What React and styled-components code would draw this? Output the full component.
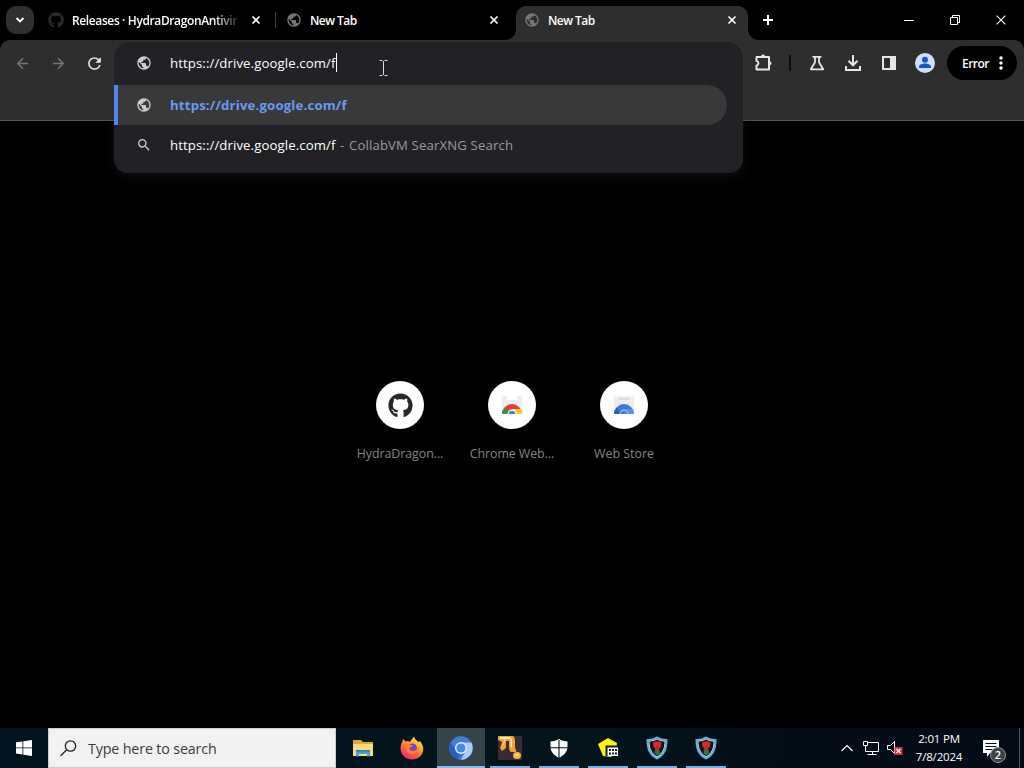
import React from 'react';
import styled, { createGlobalStyle } from 'styled-components';
import { FaGithub } from 'react-icons/fa';
import { MdPublic, MdSearch, MdArrowBack, MdArrowForward, MdRefresh, MdMoreVert } from 'react-icons/md';

const Global = createGlobalStyle`
  * { box-sizing: border-box; }
  html, body { margin: 0; background: #000; overflow: hidden; }
  body { font-family: "Open Sans", "Noto Sans", sans-serif; color: #fff; }
  svg { display: block; flex: none; }
`;

const Screen = styled.div`
  width: 1024px;
  height: 768px;
  display: flex;
  flex-direction: column;
  background: #000;
  position: relative;
`;

const TabStrip = styled.div`
  height: 40px;
  flex: none;
  display: flex;
  padding-left: 6px;
`;

const TabSearch = styled.div`
  width: 28px;
  height: 28px;
  margin: 6px 6px 0 0;
  border-radius: 10px;
  background: #303030;
  display: grid;
  place-items: center;
`;

const Tab = styled.div`
  position: relative;
  width: 232px;
  height: 34px;
  margin-top: 6px;
  padding: 0 10px 0 8px;
  display: flex;
  align-items: center;
  border-radius: 10px 10px 0 0;
  background: ${(p) => (p.$active ? '#2e2e2e' : 'transparent')};
  ${(p) => p.$active && `
    &::before, &::after {
      content: "";
      position: absolute;
      bottom: 0;
      width: 10px;
      height: 10px;
      background: radial-gradient(circle at 0 0, transparent 9.5px, #2e2e2e 10px);
    }
    &::before { left: -10px; }
    &::after { right: -10px; transform: scaleX(-1); }
  `}
`;

const Favicon = styled.div`
  width: 16px;
  margin: -6px 8px 0 0;
  color: ${(p) => p.$color};
`;

const TabTitle = styled.div`
  flex: 1;
  margin-top: -4px;
  font-size: 12px;
  line-height: 18px;
  font-weight: 600;
  letter-spacing: ${(p) => p.$track || 0}px;
  white-space: nowrap;
  ${(p) => p.$fade && 'mask-image: linear-gradient(90deg, #000 calc(100% - 28px), transparent);'}
`;

const TabClose = styled.div`
  width: 28px;
  margin: -6px -8px 0 0;
  display: grid;
  place-items: center;
`;

const TabDivider = styled.div`
  width: 1px;
  height: 16px;
  margin: 12px 2px 0 3px;
  background: ${(p) => (p.$hidden ? 'transparent' : '#3a3a3a')};
`;

const NewTab = styled.div`
  width: 28px;
  height: 28px;
  margin: 6px 0 0 6px;
  display: grid;
  place-items: center;
`;

const WindowControls = styled.div`
  margin-left: auto;
  display: flex;
`;

const WindowButton = styled.div`
  width: 46px;
  height: 40px;
  display: grid;
  place-items: center;
`;

const Toolbar = styled.div`
  height: 81px;
  flex: none;
  background: #2e2e2e;
  border-bottom: 1px solid #555;
  border-radius: 10px 10px 0 0;
  display: flex;
  justify-content: space-between;
  padding: 5px 7px 0 4px;
`;

const ToolGroup = styled.div`
  display: flex;
  height: 36px;
  align-items: center;
`;

const ToolButton = styled.div`
  width: 36px;
  height: 36px;
  display: grid;
  place-items: center;
  color: ${(p) => (p.$dim ? '#777' : '#e6e6e6')};
`;

const ToolDivider = styled.div`
  width: 2px;
  height: 16px;
  margin: 0 8px;
  background: #0c0c0c;
`;

const ErrorPill = styled.div`
  width: 70px;
  height: 34px;
  margin-left: 4px;
  padding-left: 15px;
  border-radius: 17px;
  background: #000;
  display: flex;
  align-items: center;
  font-size: 12px;
  font-weight: 600;
  letter-spacing: -0.55px;
  svg { margin-left: 2px; }
`;

const Omnibox = styled.div`
  position: absolute;
  left: 114px;
  top: 42px;
  width: 629px;
  height: 131px;
  border-radius: 16px 16px 14px 14px;
  background: #212126;
  box-shadow: 0 3px 12px rgba(60, 60, 65, 0.28);
  overflow: hidden;
`;

const OmniRow = styled.div`
  height: ${(p) => p.$height}px;
  width: ${(p) => (p.$selected ? 613 : 629)}px;
  display: flex;
  align-items: center;
  padding-left: 22px;
  font-size: 13.2px;
  line-height: 20px;
  white-space: pre;
  background: ${(p) => (p.$selected ? '#393939' : 'transparent')};
  border-radius: 0 20px 20px 0;
  ${(p) => p.$selected && 'border-left: 4px solid #4f86ec; padding-left: 18px;'}
  ${(p) => p.$input && 'padding-bottom: 2px;'}
  svg { color: #ccc; margin-right: 18px; }
`;

const OmniText = styled.span`
  color: ${(p) => p.$color || '#fff'};
  font-weight: ${(p) => (p.$bold ? 700 : 400)};
  letter-spacing: ${(p) => p.$track || 0}px;
  margin-left: ${(p) => p.$gap || 0}px;
`;

const Caret = styled.div`
  width: 1px;
  height: 19px;
  background: #fff;
`;

const Pointer = styled.svg`
  position: absolute;
  left: 378px;
  top: 59px;
`;

const Page = styled.main`
  flex: 1;
  display: flex;
  justify-content: center;
  align-items: flex-start;
  padding-top: 260px;
`;

const Shortcut = styled.div`
  width: 112px;
  display: flex;
  flex-direction: column;
  align-items: center;
`;

const ShortcutDisc = styled.div`
  width: 48px;
  height: 48px;
  border-radius: 50%;
  background: #fff;
  color: #24292e;
  display: grid;
  place-items: center;
`;

const ShortcutLabel = styled.div`
  margin-top: 16px;
  font-size: 12.4px;
  line-height: 18px;
  letter-spacing: ${(p) => p.$track || 0}px;
  color: #81868b;
  white-space: nowrap;
`;

const Taskbar = styled.footer`
  height: 40px;
  flex: none;
  display: flex;
  background: linear-gradient(90deg, #02151f, #03131c 60%, #030d18 76%, #030b16);
`;

const StartButton = styled.div`
  width: 48px;
  display: grid;
  place-items: center;
`;

const SearchBox = styled.div`
  width: 288px;
  border: 1px solid #c6ccd0;
  background: #f2f2f2;
  display: flex;
  align-items: center;
  padding-left: 11px;
  gap: 11px;
  color: #3c3c3c;
  font-size: 14.3px;
  letter-spacing: -0.16px;
`;

const Apps = styled.div`
  display: flex;
  gap: 1px;
  padding-left: 3px;
`;

const AppButton = styled.div`
  width: 48px;
  height: 40px;
  display: grid;
  place-items: center;
  background: ${(p) => (p.$active ? '#344448' : 'transparent')};
  box-shadow: ${(p) => (p.$active ? 'inset 0 -2px #86bdf0' : 'none')};
  position: relative;
  ${(p) => p.$open && `&::after {
    content: "";
    position: absolute;
    left: 4px;
    right: 4px;
    bottom: 0;
    height: 2px;
    background: #78b0e4;
  }`}
`;

const Tray = styled.div`
  margin-left: auto;
  display: flex;
  align-items: center;
`;

const Clock = styled.div`
  width: 72px;
  text-align: center;
  font-size: 11.5px;
  line-height: 18px;
  letter-spacing: -0.2px;
`;

const Notifications = styled.div`
  width: 44px;
  padding: 0 0 0 8px;
  position: relative;
`;

const Badge = styled.div`
  position: absolute;
  left: 15px;
  top: 7px;
  width: 16px;
  height: 16px;
  border-radius: 50%;
  border: 1px solid #8b9297;
  background: #3b4248;
  font-size: 11px;
  font-weight: 600;
  line-height: 14px;
  text-align: center;
`;

const ShowDesktop = styled.div`
  width: 5px;
  height: 40px;
  border-left: 1px solid #4c555e;
`;

const Cross = ({ size = 8, w = 1.7 }) => (
  <svg width={size} height={size} viewBox="0 0 8 8" stroke="#fff" strokeWidth={w} overflow="visible">
    <path d="M.5.5l7 7M7.5.5l-7 7" />
  </svg>
);

const Puzzle = () => (
  <svg width="20" height="20" viewBox="0 0 20 20" fill="none" stroke="currentColor" strokeWidth="2">
    <path d="M3.500 4H16v12.500H3.500v-3.800c2.600-.800 2.600-4 0-4.800z" strokeLinejoin="round" />
    <path d="M8 3.500a2 2 0 014 0zM16.500 8.300a2 2 0 010 4z" fill="currentColor" stroke="none" />
  </svg>
);

const Flask = () => (
  <svg width="20" height="20" viewBox="0 0 20 20" fill="none" stroke="currentColor" strokeWidth="1.8">
    <path d="M5.500 3.800h9M8 4v5.200L3.800 16.300h12.400L12 9.200V4" strokeLinejoin="round" />
  </svg>
);

const Download = () => (
  <svg width="20" height="20" viewBox="0 0 20 20" fill="none" stroke="currentColor" strokeWidth="2">
    <path d="M10 2v10M5.500 7.800L10 12.300l4.500-4.500M3 13v4h14v-4" />
  </svg>
);

const SidePanel = () => (
  <svg width="20" height="20" viewBox="0 0 20 20">
    <path d="M4 4h12v12H4z" fill="none" stroke="currentColor" strokeWidth="2" />
    <path d="M11 4h5v12h-5z" fill="currentColor" />
  </svg>
);

const Avatar = () => (
  <svg width="20" height="20" viewBox="0 0 20 20">
    <circle cx="10" cy="10" r="10" fill="#cfe2fc" />
    <circle cx="10" cy="6.800" r="3" fill="#1b57c4" />
    <path d="M4 15v-1.500c0-2 3.500-3 6-3s6 1 6 3V15z" fill="#1b57c4" />
  </svg>
);

const StoreIcon = ({ blue }) => (
  <svg width="24" height="24" viewBox="0 0 24 24">
    <path d="M2 3h20v18H2z" fill="#eceeef" />
    {blue ? <path d="M7 5h10v2H7z" fill="#d9dbdc" /> : <path d="M7 3h10v4H7z" fill="#fff" />}
    <path d="M2 21a10 10 0 0120 0z" fill={blue ? '#3c78dd' : '#d94436'} />
    <path d="M2 21a10 10 0 012.500-6.600L9 21z" fill={blue ? '#2a62c8' : '#2b9a52'} />
    <path d="M12 16h8.700a10 10 0 011.300 5h-7z" fill={blue ? '#5c90e8' : '#f8cc38'} />
    <path d="M7.500 21a4.500 4.500 0 019 0z" fill={blue ? '#9fc1f8' : '#fff'} />
    <path d="M8.700 21a3.300 3.300 0 016.600 0z" fill="#3f7fe6" />
  </svg>
);

const Folder = () => (
  <svg width="22" height="20" viewBox="0 0 22 20">
    <path d="M1 2h8l2 2h10v14H1z" fill="#dda63a" />
    <path d="M1 6h20v12H1z" fill="#f9dc7a" />
    <path d="M4 18.500V12h14v6.500h-3V16H7v2.500z" fill="#4a9dd8" />
    <path d="M4 12h14v1.500H4z" fill="#2a78b4" />
  </svg>
);

const Firefox = () => (
  <svg width="24" height="24" viewBox="0 0 24 24">
    <defs>
      <linearGradient id="fox" x1=".8" y1="0" x2=".2" y2="1">
        <stop offset="0" stopColor="#fff14a" />
        <stop offset=".4" stopColor="#ff9a2b" />
        <stop offset=".75" stopColor="#ff4650" />
        <stop offset="1" stopColor="#e3208c" />
      </linearGradient>
    </defs>
    <path d="M2 6l1.500-3 2 2.500L8 5l1.500 1C11 5 12 3 14 .5c.500 3 3 4 4.500 5.500L20 5c2.200 3 3.500 5.500 3.300 8.500C23 19.500 18 23.500 12 23.500S.500 19 .500 12.500C.500 10 1 8 2 6z" fill="url(#fox)" />
    <circle cx="12.300" cy="12" r="4.600" fill="#7542c8" />
    <path d="M5 8c3-1 5 .500 8 1.500-1 2-3 1.500-4 3 1 3 5 3 8 1-1 4-4 5.500-7 4.500S5 14 5 8z" fill="#ff7f2e" />
  </svg>
);

const Chromium = () => (
  <svg width="24" height="24" viewBox="0 0 24 24">
    <circle cx="12" cy="12" r="11.800" fill="#3d7ddb" />
    <path d="M12 6.500h10.400A11.800 11.800 0 0112 23.800l4.800-9z" fill="#a9cbf8" />
    <path d="M1.700 6.200L7 14.800l5 2.700-3 6A11.800 11.800 0 011.700 6.200z" fill="#2560bb" />
    <circle cx="12" cy="12" r="6" fill="#e7f1fd" />
    <circle cx="12" cy="12" r="4.600" fill="#4789e8" />
  </svg>
);

const Hook = () => (
  <svg width="24" height="24" viewBox="0 0 24 24">
    <path d="M0 0h24v24H0z" fill="#3a2b36" />
    <path d="M0 0h14c3 0 3 3 3 6v5c0 3 2 2 1 5h-5c-2-1-2-4-2-7V5H8v7l-4 3-2-3 2-6-4-2z" fill="#f0a535" />
    <path d="M2 1h10l2 2v9l-1.500-2V3H7L6 9H5l1-6H2z" fill="#ffe7ad" />
    <ellipse cx="19" cy="19.500" rx="4" ry="3.500" fill="#f9b638" />
    <path d="M17.500 18h3v1.500h-3z" fill="#fff0bb" />
  </svg>
);

const Defender = () => (
  <svg width="18" height="19" viewBox="0 0 18 19">
    <path d="M9 0c2.500 1.500 5 2.300 8.500 2.500V8c0 5-4 8.500-8.500 10.800C4.500 16.500.500 13 .500 8V2.500C4 2.300 6.500 1.500 9 0z" fill="#fff" />
    <path d="M9 1v18M0 8.700h18" stroke="#03131c" strokeWidth="1.100" />
  </svg>
);

const YellowSheet = () => (
  <svg width="22" height="22" viewBox="0 0 22 22">
    <path d="M11 1l9 5-1 6-5 8-8-1L1 7z" fill="#fbf315" />
    <path d="M8.500 8.500H21V19H8.500z" fill="#10232c" />
    <path d="M10.500 10.500H21V19H10.500z" fill="#fff" />
    <path d="M12 12h2v2h-2zM15 12h2v2h-2zM18 12h2v2h-2zM12 15.500h2v2h-2zM15 15.500h2v2h-2zM18 15.500h2v2h-2z" fill="#10232c" />
  </svg>
);

const HydraShield = () => (
  <svg width="22" height="24" viewBox="0 0 22 24">
    <path d="M11 1.500c3 2 6 2.500 9.500 2.500 0 9-2 14-9.500 18.500C3.500 18 1.500 13 1.500 4 5 4 8 3.500 11 1.500z" fill="#10161d" stroke="#5db5dc" strokeWidth="2" />
    <path d="M11 3c3 1.700 5 2 8 2 0 7.500-2 12-8 16C5 17 3 12.500 3 5c3 0 5-.300 8-2z" fill="none" stroke="#e5f4f7" strokeWidth=".9" />
    <path d="M7 6.500l3-1h3l2.500 1-.500 4-2.500 2.500h-2.500L7.500 10.500z" fill="#e5232b" />
    <path d="M9.500 12h3.500l1 5-2.700 2.500L8.500 17z" fill="#2c7a42" />
    <path d="M10 10h2v5h-2z" fill="#b92928" />
  </svg>
);

const tabs = [
  { title: 'Releases · HydraDragonAntivir', track: -0.38, fade: true, icon: <FaGithub size={16} />, color: '#2a2a2a' },
  { title: 'New Tab', track: -0.55, icon: <MdPublic size={16} />, color: '#777' },
  { title: 'New Tab', track: -0.55, active: true, icon: <MdPublic size={16} />, color: '#777' },
];

const shortcuts = [
  { label: 'HydraDragon...', track: -0.05, icon: <FaGithub size={25} /> },
  { label: 'Chrome Web...', track: -0.08, icon: <StoreIcon /> },
  { label: 'Web Store', icon: <StoreIcon blue /> },
];

export default function App() {
  return (
    <Screen>
      <Global />
      <TabStrip>
        <TabSearch>
          <svg width="10" height="6" viewBox="0 0 10 6" fill="none" stroke="#fff" strokeWidth="1.8"><path d="M1.500 1L5 4.500 8.500 1" /></svg>
        </TabSearch>
        {tabs.map((t, i) => (
          <React.Fragment key={i}>
            <Tab $active={t.active}>
              <Favicon $color={t.color}>{t.icon}</Favicon>
              <TabTitle $fade={t.fade} $track={t.track}>{t.title}</TabTitle>
              <TabClose><Cross /></TabClose>
            </Tab>
            {i < tabs.length - 1 && <TabDivider $hidden={tabs[i + 1].active} />}
          </React.Fragment>
        ))}
        <NewTab>
          <svg width="12" height="12" viewBox="0 0 12 12" stroke="#fff" strokeWidth="2"><path d="M6 1v10M1 6h10" /></svg>
        </NewTab>
        <WindowControls>
          <WindowButton><svg width="10" height="10" stroke="#fff"><path d="M0 5.500h10" /></svg></WindowButton>
          <WindowButton><svg width="10" height="10" stroke="#fff" fill="none"><path d="M.500 2.500h7v7h-7zM2.500 2.500v-2h7v7h-2" /></svg></WindowButton>
          <WindowButton><Cross size={10} w={0.9} /></WindowButton>
        </WindowControls>
      </TabStrip>
      <Toolbar>
        <ToolGroup>
          <ToolButton $dim><MdArrowBack size={17} /></ToolButton>
          <ToolButton $dim><MdArrowForward size={17} /></ToolButton>
          <ToolButton><MdRefresh size={19} /></ToolButton>
        </ToolGroup>
        <ToolGroup>
          <ToolButton><Puzzle /></ToolButton>
          <ToolDivider />
          <ToolButton><Flask /></ToolButton>
          <ToolButton><Download /></ToolButton>
          <ToolButton><SidePanel /></ToolButton>
          <ToolButton><Avatar /></ToolButton>
          <ErrorPill>Error<MdMoreVert size={20} /></ErrorPill>
        </ToolGroup>
      </Toolbar>
      <Omnibox>
        <OmniRow $height={43} $input>
          <MdPublic size={16} />
          <OmniText $track={0.1}>https:://drive.google.com/f</OmniText>
          <Caret />
        </OmniRow>
        <OmniRow $height={40} $selected>
          <MdPublic size={16} />
          <OmniText $bold $color="#699af5" $track={0.17}>https://drive.google.com/f</OmniText>
        </OmniRow>
        <OmniRow $height={40}>
          <MdSearch size={16} />
          <OmniText $track={0.1}>https:://drive.google.com/f</OmniText>
          <OmniText $color="#9b9b9f" $track={0.13} $gap={1}>{' -'}</OmniText>
          <OmniText $color="#9b9b9f" $track={0.13} $gap={1}>{' CollabVM SearXNG Search'}</OmniText>
        </OmniRow>
      </Omnibox>
      <Pointer width="10" height="18" viewBox="0 0 10 18" fill="none" stroke="#ddd">
        <path d="M1.500 1.500h3M6.500 1.500h3M5.500 2v14M1.500 16.500h3M6.500 16.500h3" />
      </Pointer>
      <Page>
        {shortcuts.map((s) => (
          <Shortcut key={s.label}>
            <ShortcutDisc>{s.icon}</ShortcutDisc>
            <ShortcutLabel $track={s.track}>{s.label}</ShortcutLabel>
          </Shortcut>
        ))}
      </Page>
      <Taskbar>
        <StartButton>
          <svg width="16" height="16" viewBox="0 0 16 16" fill="#fff"><path d="M0 2.300l6.500-.900v6.100H0zM7.300 1.300L16 0v7.500H7.300zM0 8.300h6.500v6.200L0 13.600zM7.300 8.300H16V16l-8.700-1.300z" /></svg>
        </StartButton>
        <SearchBox>
          <svg width="17" height="17" viewBox="0 0 17 17" fill="none" stroke="#222" strokeWidth="1.300"><circle cx="10.500" cy="6" r="5.200" /><path d="M6.700 9.800L.500 16" /></svg>
          <span>Type here to search</span>
        </SearchBox>
        <Apps>
          <AppButton><Folder /></AppButton>
          <AppButton><Firefox /></AppButton>
          <AppButton $active><Chromium /></AppButton>
          <AppButton $open><Hook /></AppButton>
          <AppButton $open><Defender /></AppButton>
          <AppButton $open><YellowSheet /></AppButton>
          <AppButton $open><HydraShield /></AppButton>
          <AppButton $open><HydraShield /></AppButton>
        </Apps>
        <Tray>
          <svg width="12" height="8" viewBox="0 0 12 8" fill="none" stroke="#fff" strokeWidth="1.200"><path d="M.500 7L6 1.500 11.500 7" /></svg>
          <svg width="34" height="16" viewBox="0 0 34 16" fill="none" stroke="#fff">
            <path d="M14.500 2.500h11v9h-13v-6M14.500 14.500h9M19.500 12v2M10.500 1.500h4v4h-4z" />
          </svg>
          <svg width="16" height="16" viewBox="0 0 16 16" fill="none" stroke="#fff">
            <path d="M.500 5.500h3l4-4v12l-4-4h-3z" />
            <path d="M7.500 7h8v8h-8z" fill="#cf343b" stroke="none" />
            <path d="M9.500 9l4 4M13.500 9l-4 4" strokeWidth="1.300" />
          </svg>
          <Clock>2:01 PM<br />7/8/2024</Clock>
          <Notifications>
            <svg width="16" height="17" viewBox="0 0 16 17"><path d="M0 0h16v13H7l-3 4v-4H0z" fill="#fff" /><path d="M2.500 3.500h11M2.500 6.500h11M2.500 9.500h7" stroke="#030b16" /></svg>
            <Badge>2</Badge>
          </Notifications>
          <ShowDesktop />
        </Tray>
      </Taskbar>
    </Screen>
  );
}
